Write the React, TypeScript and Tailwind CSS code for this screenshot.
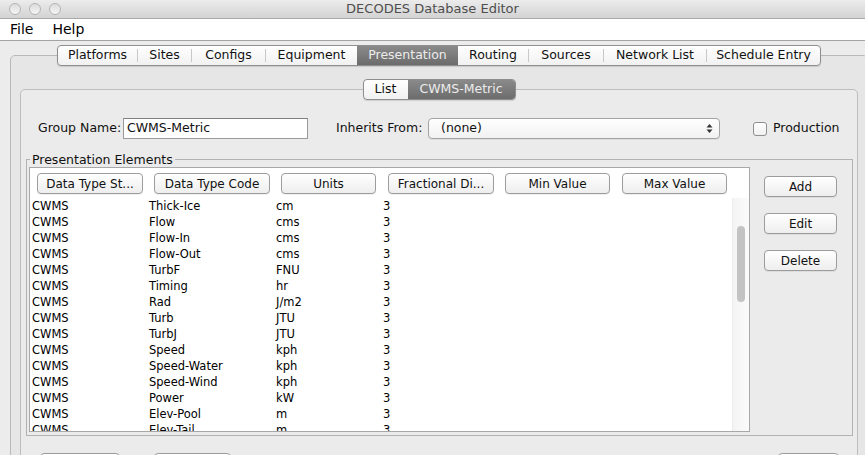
import React from 'react';

const FONT = { fontFamily: '"DejaVu Sans", "Noto Sans", sans-serif' };

const ROWS: [string, string, string, string][] = [
  ['CWMS', 'Thick-Ice', 'cm', '3'],
  ['CWMS', 'Flow', 'cms', '3'],
  ['CWMS', 'Flow-In', 'cms', '3'],
  ['CWMS', 'Flow-Out', 'cms', '3'],
  ['CWMS', 'TurbF', 'FNU', '3'],
  ['CWMS', 'Timing', 'hr', '3'],
  ['CWMS', 'Rad', 'J/m2', '3'],
  ['CWMS', 'Turb', 'JTU', '3'],
  ['CWMS', 'TurbJ', 'JTU', '3'],
  ['CWMS', 'Speed', 'kph', '3'],
  ['CWMS', 'Speed-Water', 'kph', '3'],
  ['CWMS', 'Speed-Wind', 'kph', '3'],
  ['CWMS', 'Power', 'kW', '3'],
  ['CWMS', 'Elev-Pool', 'm', '3'],
  ['CWMS', 'Elev-Tail', 'm', '3'],
];

const TABS = [
  { label: 'Platforms', w: 'w-[79px]' },
  { label: 'Sites', w: 'w-[53px]' },
  { label: 'Configs', w: 'w-[73px]' },
  { label: 'Equipment', w: 'w-[91px]' },
  { label: 'Presentation', w: 'w-[101px]', active: true },
  { label: 'Routing', w: 'w-[70px]' },
  { label: 'Sources', w: 'w-[74px]' },
  { label: 'Network List', w: 'w-[102px]' },
  { label: 'Schedule Entry', w: 'w-[113px]' },
];

// header columns: column width + button width
const COLS = [
  { label: 'Data Type St...', col: 'w-[117px]', btn: 'w-[106px]' },
  { label: 'Data Type Code', col: 'w-[127px]', btn: 'w-[116px]' },
  { label: 'Units', col: 'w-[107px]', btn: 'w-[95px]' },
  { label: 'Fractional Di...', col: 'w-[117px]', btn: 'w-[106px]' },
  { label: 'Min Value', col: 'w-[117px]', btn: 'w-[105px]' },
  { label: 'Max Value', col: 'w-[117px]', btn: 'w-[105px]' },
];
const CELL_W = ['w-[117px]', 'w-[127px]', 'w-[107px]', 'w-[117px]'];

function AquaButton({ label, className = '' }: { label: string; className?: string }) {
  return (
    <div
      className={`h-[21px] flex items-center justify-center rounded-[4px] border border-[#9c9c9c] bg-gradient-to-b from-white to-[#eeeeee] shadow-[0_1px_0_rgba(0,0,0,0.06)] text-[12px] text-[#111] leading-none ${className}`}
    >
      {label}
    </div>
  );
}

function Segmented({ items }: { items: { label: string; w: string; active?: boolean }[] }) {
  return (
    <div className="flex rounded-[4px] border border-[#8e8e8e] bg-gradient-to-b from-white to-[#f1f1f1] shadow-[0_1px_1px_rgba(0,0,0,0.12)] overflow-hidden">
      {items.map((t, i) => {
        const prev = items[i - 1];
        const showSep = i > 0 && !t.active && !prev?.active;
        return (
          <React.Fragment key={t.label}>
            {showSep && <span className="w-px h-[13px] self-center bg-[#c8c8c8]" />}
            <div
              className={`${t.w} h-[19px] flex items-center justify-center text-[12.5px] leading-none ${
                t.active
                  ? 'bg-gradient-to-b from-[#8a8a8a] to-[#6c6c6c] text-[#ececec]'
                  : 'text-[#111]'
              }`}
            >
              {t.label}
            </div>
          </React.Fragment>
        );
      })}
    </div>
  );
}

export default function App() {
  return (
    <div className="w-[865px] h-[455px] overflow-hidden bg-[#ececec] flex flex-col" style={FONT}>
      {/* Title bar */}
      <div className="relative h-[19px] shrink-0 bg-gradient-to-b from-[#ececec] to-[#d3d3d3] border-b border-[#a9a9a9] flex items-center">
        <div className="flex gap-[8px] pl-[9px]">
          {[0, 1, 2].map((i) => (
            <span
              key={i}
              className="w-[12px] h-[12px] rounded-full border border-[#b4b4b4] bg-gradient-to-b from-[#dcdcdc] to-[#f6f6f6]"
            />
          ))}
        </div>
        <div className="absolute inset-0 flex items-center justify-center text-[13px] text-[#4e4e4e] pointer-events-none">
          DECODES Database Editor
        </div>
      </div>

      {/* Menu bar */}
      <div className="h-[22px] shrink-0 bg-white border-b border-[#a3a3a3] flex items-center gap-[19px] pl-[10px] text-[14px] text-black">
        <span>File</span>
        <span>Help</span>
      </div>

      {/* Body */}
      <div className="flex-1 min-h-0">
        {/* Outer tabbed pane */}
        <div className="ml-[10px] mt-[14px] w-[858px] h-[420px] rounded-[5px] border border-[#b9b9b9] bg-[#e6e6e6] flex flex-col items-center">
          <div className="-mt-[11px]">
            <Segmented items={TABS} />
          </div>

          {/* Inner tabbed pane */}
          <div className="self-start ml-[9px] mt-[23px] w-[838px] h-[380px] rounded-[5px] border border-[#bdbdbd] bg-[#ebebeb] flex flex-col">
            <div className="-mt-[11px] flex justify-center">
              <Segmented
                items={[
                  { label: 'List', w: 'w-[44px]' },
                  { label: 'CWMS-Metric', w: 'w-[107px]', active: true },
                ]}
              />
            </div>

            {/* Group name row */}
            <div className="mt-[18px] pl-[17px] flex items-center h-[21px] text-[12.5px] text-[#111]">
              <span className="w-[85px]">Group Name:</span>
              <div className="w-[185px] h-[21px] border border-[#9a9a9a] border-t-[#7f7f7f] bg-white flex items-center pl-[3px]">
                CWMS-Metric
              </div>
              <span className="ml-[28px] w-[92px]">Inherits From:</span>
              <div className="w-[292px] h-[21px] rounded-[4px] border border-[#a3a3a3] bg-gradient-to-b from-white to-[#f1f1f1] shadow-[0_1px_0_rgba(0,0,0,0.06)] flex items-center pl-[12px] pr-[6px]">
                <span className="flex-1">(none)</span>
                <svg width="7" height="11" viewBox="0 0 7 11">
                  <path d="M3.5 1 L6.5 4.5 L0.5 4.5 Z" fill="#333" />
                  <path d="M3.5 10 L6.5 6.5 L0.5 6.5 Z" fill="#333" />
                </svg>
              </div>
              <span className="ml-[33px] w-[14px] h-[14px] rounded-[3px] border border-[#8f8f8f] bg-gradient-to-b from-white to-[#f0f0f0]" />
              <span className="ml-[6px]">Production</span>
            </div>

            {/* Presentation Elements */}
            <fieldset className="ml-[5px] mt-[13px] w-[827px] border border-[#b2b2b2] pb-[3px]">
              <legend className="ml-[3px] px-[2px] text-[12.5px] leading-[15px] text-[#111]">
                Presentation Elements
              </legend>
              <div className="flex pl-[2px]">
                {/* Table */}
                <div className="w-[721px] h-[265px] border border-[#a8a8a8] bg-white flex flex-col overflow-hidden">
                  <div className="h-[30px] shrink-0 flex pt-[5px]">
                    {COLS.map((c) => (
                      <div key={c.label} className={`${c.col} shrink-0 pl-[7px]`}>
                        <AquaButton label={c.label} className={c.btn} />
                      </div>
                    ))}
                  </div>
                  <div className="flex flex-1 min-h-0">
                    <div className="w-[702px] shrink-0 overflow-hidden text-[11.5px] text-black">
                      {ROWS.map((r, i) => (
                        <div key={i} className="flex h-[16px] leading-[16px]">
                          {r.map((c, j) => (
                            <div key={j} className={`${CELL_W[j]} shrink-0 pl-[2px] whitespace-nowrap`}>
                              {c}
                            </div>
                          ))}
                        </div>
                      ))}
                    </div>
                    <div className="w-[17px] shrink-0 border-l border-[#ececec] bg-gradient-to-r from-[#f4f4f4] to-[#fbfbfb] pl-[4px] pt-[28px]">
                      <div className="w-[8px] h-[76px] rounded-full bg-[#c3c3c3]" />
                    </div>
                  </div>
                </div>

                {/* Side buttons */}
                <div className="ml-[14px] pt-[9px] flex flex-col gap-[16px]">
                  <AquaButton label="Add" className="w-[73px]" />
                  <AquaButton label="Edit" className="w-[73px]" />
                  <AquaButton label="Delete" className="w-[73px]" />
                </div>
              </div>
            </fieldset>

            {/* Bottom buttons (cut off) */}
            <div className="mt-[17px] flex">
              <AquaButton label="" className="ml-[19px] w-[80px]" />
              <AquaButton label="" className="ml-[34px] w-[77px]" />
              <AquaButton label="" className="ml-[547px] w-[61px]" />
            </div>
          </div>
        </div>
      </div>
    </div>
  );
}
